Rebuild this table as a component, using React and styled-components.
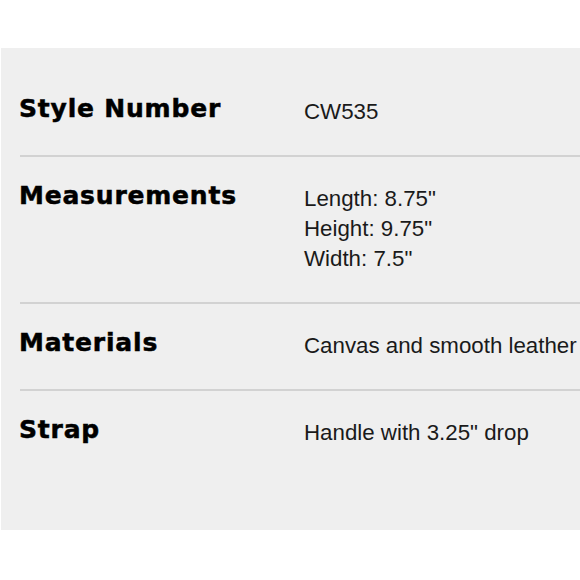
import styled, { createGlobalStyle } from "styled-components";

const GlobalStyle = createGlobalStyle`
  body {
    margin: 0;
    background-color: #ffffff;
  }
`;

const Panel = styled.div`
  margin-top: 48px;
  margin-left: 1px;
  padding: 22px 0 54px 0;
  background-color: #efefef;
  overflow: hidden;
`;

const Row = styled.div`
  display: grid;
  grid-template-columns: 284px 1fr;
  margin-left: 19px;
  padding: 27px 0 28px 0;
  border-top: ${(props) => (props.first ? "none" : "2px solid #d2d2d2")};
`;

const Label = styled.span`
  margin-left: -1px;
  font-family: "DejaVu Sans", sans-serif;
  font-weight: 700;
  font-size: 25px;
  letter-spacing: 0.8px;
  line-height: 24px;
  color: #000000;
  -webkit-text-stroke: 0.5px #000000;
`;

const Values = styled.div`
  display: flex;
  flex-direction: column;
`;

const Value = styled.span`
  font-family: "Liberation Sans", Arial, sans-serif;
  font-size: 22.3px;
  line-height: 30px;
  color: #1a1a1a;
  white-space: nowrap;
`;

const specs = [
  { label: "Style Number", values: ["CW535"] },
  {
    label: "Measurements",
    values: ['Length: 8.75"', 'Height: 9.75"', 'Width: 7.5"'],
  },
  { label: "Materials", values: ["Canvas and smooth leather"] },
  { label: "Strap", values: ['Handle with 3.25" drop'] },
];

function App() {
  return (
    <>
      <GlobalStyle />
      <Panel>
        {specs.map((spec, i) => (
          <Row key={spec.label} first={i === 0}>
            <Label>{spec.label}</Label>
            <Values>
              {spec.values.map((v) => (
                <Value key={v}>{v}</Value>
              ))}
            </Values>
          </Row>
        ))}
      </Panel>
    </>
  );
}

export default App;
